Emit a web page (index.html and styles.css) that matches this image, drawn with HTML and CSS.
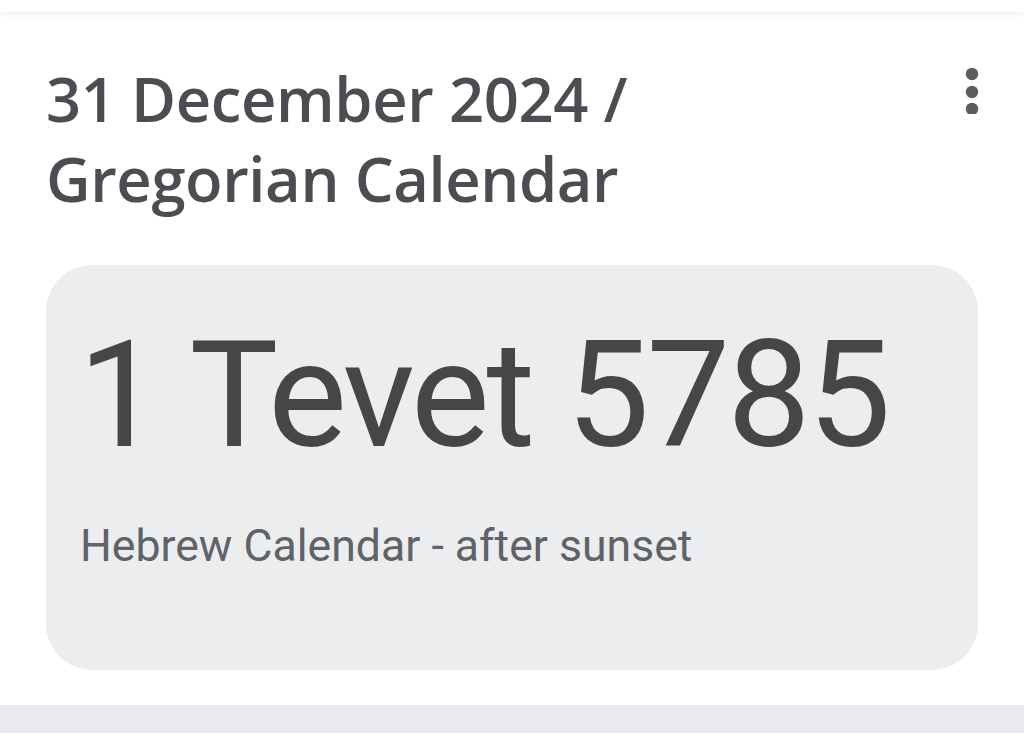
FILE: index.html
```html
<!DOCTYPE html>
<html lang="en">
<head>
<meta charset="utf-8">
<title>Hebrew date</title>
<link rel="stylesheet" href="styles.css">
</head>
<body>
<div class="topbar"></div>
<div class="header">
  <h1 class="title">31 December 2024 /<br>Gregorian Calendar</h1>
  <button class="more" aria-label="More options">
    <svg width="24" height="48" viewBox="0 0 24 48">
      <circle cx="12" cy="8" r="6.2" fill="#5a5d61"/>
      <circle cx="12" cy="26" r="6.2" fill="#5a5d61"/>
      <circle cx="12" cy="43" r="6.2" fill="#5a5d61"/>
    </svg>
  </button>
</div>
<div class="card">
  <div class="hdate">1 Tevet 5785</div>
  <div class="hsub">Hebrew Calendar - after sunset</div>
</div>
<div class="bottombar"></div>
</body>
</html>
```
FILE: styles.css
```css
html, body {
  margin: 0;
  padding: 0;
  background: #ffffff;
}
body {
  width: 1024px;
  height: 748px;
  overflow: hidden;
  font-family: "Open Sans", Roboto, sans-serif;
}
.topbar {
  height: 12px;
  background: #ffffff;
  box-shadow: 0 2px 6px rgba(0, 0, 0, 0.07);
}
.header {
  display: flex;
  justify-content: space-between;
  align-items: flex-start;
  padding: 46px 40px 0 46px;
  height: 205px;
  box-sizing: border-box;
}
.title {
  margin: 0;
  font-family: "Open Sans", sans-serif;
  font-weight: 600;
  font-size: 61.5px;
  line-height: 80px;
  color: #4a4d51;
  letter-spacing: -0.4px;
}
.more {
  border: 0;
  background: none;
  padding: 0;
  margin: 8px 0 0 0;
  width: 24px;
  height: 48px;
}
.card {
  margin: 48px 46px 0 46px;
  height: 405px;
  background: #ecedef;
  border-radius: 46px;
  padding: 50px 0 0 32px;
  box-sizing: border-box;
}
.hdate {
  font-family: Roboto, sans-serif;
  font-size: 149px;
  line-height: 160px;
  color: #464646;
  letter-spacing: -3.2px;
}
.hsub {
  margin-top: 45px;
  padding-left: 2px;
  font-family: Roboto, sans-serif;
  font-size: 44.6px;
  line-height: 52px;
  color: #5f6266;
}
.bottombar {
  margin-top: 35px;
  height: 28px;
  background: #e8eaed;
}
```
